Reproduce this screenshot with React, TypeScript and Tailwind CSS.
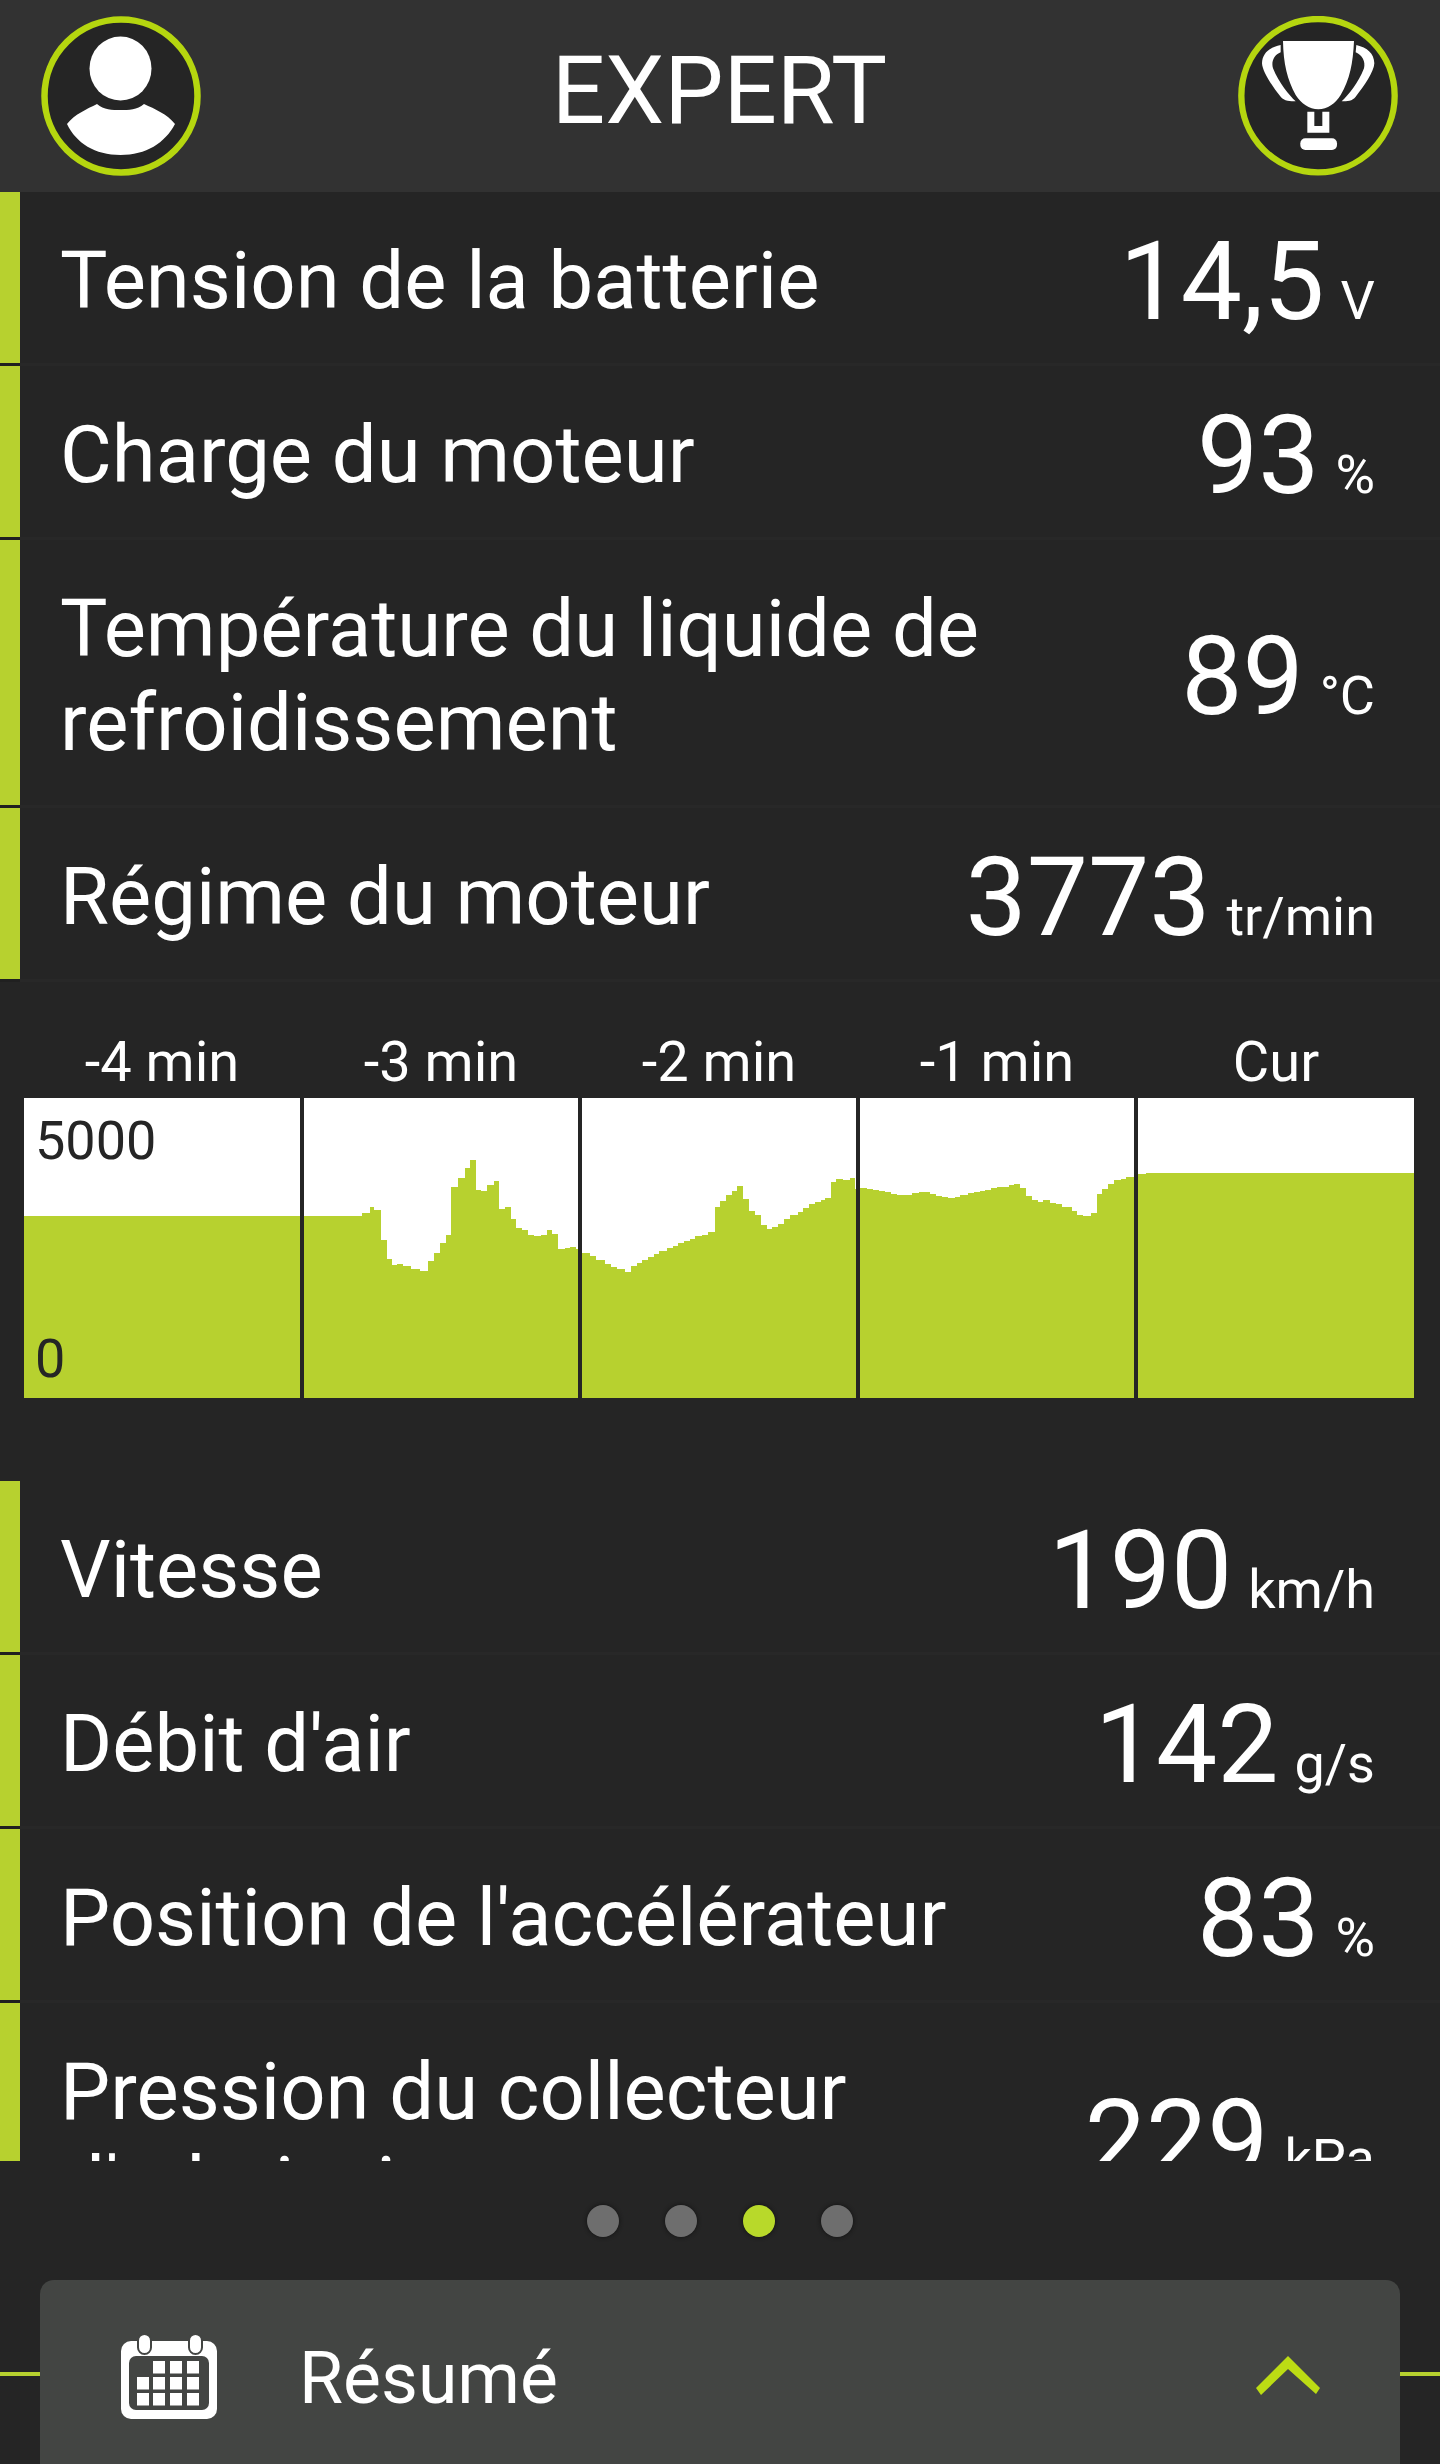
import React from "react";

const GREEN = "#b7d12f";

type Step = [number, number];

// Each step: [end x, top y] read off the chart at 3x; a column runs from the previous end x.
function outline(offset: number, start: number, steps: Step[]) {
  const pts: number[][] = [];
  let x = start;
  for (const [end, y] of steps) {
    const px = 1130 + y / 3;
    pts.push([offset + x / 3, px], [offset + end / 3, px]);
    x = end;
  }
  return pts;
}

const panels: { left: number; width: number; pts: number[][] }[] = [
  { left: 24, width: 276, pts: [[24, 1216], [300, 1216]] },
  {
    left: 304,
    width: 274,
    pts: outline(300, 12, [[186,258],[210,248],[222,232],[243,240],[261,330],[276,388],[291,405],[309,402],[333,408],[360,416],[384,424],[402,392],[420,370],[438,340],[453,316],[474,172],[495,145],[510,115],[528,90],[543,180],[561,184],[582,166],[597,153],[615,237],[633,232],[648,268],[666,294],[684,300],[702,314],[723,319],[741,314],[756,300],[774,312],[795,357],[810,354],[828,350],[834,358]]),
  },
  {
    left: 582,
    width: 274,
    pts: outline(578, 12, [[36,368],[54,378],[81,390],[99,402],[117,412],[141,418],[159,426],[177,408],[192,400],[210,390],[228,382],[243,372],[267,364],[285,355],[300,348],[318,340],[336,332],[351,326],[372,318],[390,314],[411,306],[426,232],[444,213],[462,196],[477,184],[495,168],[513,208],[531,243],[549,255],[567,284],[582,296],[600,292],[618,282],[636,268],[660,255],[675,246],[693,234],[711,222],[729,216],[741,210],[759,204],[774,155],[795,146],[816,150],[831,144],[834,176]]),
  },
  {
    left: 860,
    width: 274,
    pts: outline(856, 12, [[33,174],[51,177],[69,180],[87,183],[105,186],[123,192],[168,195],[189,190],[222,186],[240,192],[258,198],[276,202],[297,204],[312,202],[336,196],[354,190],[372,186],[387,183],[405,180],[423,174],[459,171],[474,166],[492,162],[510,174],[528,198],[546,210],[561,216],[582,210],[600,218],[618,222],[648,230],[663,244],[681,254],[705,258],[723,250],[738,192],[756,178],[774,162],[795,150],[810,146],[834,141]]),
  },
  { left: 1138, width: 276, pts: [...outline(856, 846, [[870,133],[900,129]]), [1414, 1173]] },
];

function ChartPanel({ left, width, pts }: { left: number; width: number; pts: number[][] }) {
  const poly = [[left, 1398], ...pts, [left + width, 1398]].map((p) => p.join(",")).join(" ");
  return (
    <svg
      viewBox={`${left} 1098 ${width} 300`}
      width={width}
      height={300}
      className="block shrink-0 bg-white"
      shapeRendering="crispEdges"
    >
      <polygon points={poly} fill={GREEN} />
    </svg>
  );
}

function Row({ label, value, unit, tall }: { label: React.ReactNode; value: string; unit: string; tall?: boolean }) {
  return (
    <div className={`flex ${tall ? "h-[268px]" : "h-[174px]"}`}>
      <div className="w-5 shrink-0 border-b-[3px] border-[#202020] bg-[#b7d12f] bg-clip-padding" />
      <div className="flex flex-1 items-center justify-between border-b-[3px] border-[#282828] pl-[40px] pr-[65px]">
        <div className="mt-[7px] text-[79.6px] leading-[94px] text-white">{label}</div>
        <div className="mt-[8px] flex items-baseline whitespace-nowrap text-white">
          <span className="text-[109px] leading-[120px]">{value}</span>
          <span className="ml-[16px] text-[54px] leading-[60px]">{unit}</span>
        </div>
      </div>
    </div>
  );
}

function Avatar() {
  return (
    <svg width={160} height={160} viewBox="41 16 160 160">
      <circle cx="121" cy="96" r="76.5" fill="#252525" stroke="#b5d60f" strokeWidth="6.5" />
      <ellipse cx="120.5" cy="68.5" rx="31" ry="32" fill="#fff" />
      <path d="M97 104 C104 110 112 110 120.5 110 C129 110 137 110 144 104 C155 109 167 114 175 124 C165 143 146 155 120.5 155 C95 155 76 143 67 124 C75 114 87 109 97 104Z" fill="#fff" />
    </svg>
  );
}

function Trophy() {
  return (
    <svg width={160} height={160} viewBox="417 48 480 480">
      <circle cx="657" cy="287" r="230" fill="#252525" stroke="#b5d60f" strokeWidth="19" />
      <path d="M552 123 H765 C762 190 752 240 725 285 C710 310 685 328 658 328 C631 328 606 310 590 285 C565 240 553 190 552 123Z" fill="#fff" />
      <path d="M545 135 C510 143 490 160 489 190 C490 215 520 260 545 290 C555 303 575 304 590 304 C570 285 540 250 522 205 C516 185 525 165 545 157Z" fill="#fff" />
      <path d="M772 135 C805 143 825 160 826 190 C825 215 795 260 770 290 C760 303 745 304 728 304 C748 285 778 250 795 205 C800 185 790 165 770 157Z" fill="#fff" />
      <path d="M625 335 H646 V378 H670 V335 H691 V398 H625Z" fill="#fff" />
      <rect x="604" y="415" width="110" height="35" rx="15" fill="#fff" />
    </svg>
  );
}

function Calendar() {
  return (
    <svg width={96} height={87} viewBox="121 333 96 87">
      <rect x="121" y="341" width="96" height="78" rx="10" fill="#fff" />
      <rect x="129" y="356" width="80" height="54" rx="7" fill="#434543" />
      <rect x="138" y="334" width="13" height="20" rx="6.5" fill="#fff" stroke="#434543" strokeWidth="2" />
      <rect x="189" y="334" width="13" height="20" rx="6.5" fill="#fff" stroke="#434543" strokeWidth="2" />
      {[[153,361],[170,361],[187,361],[137,377],[153,377],[170,377],[187,377],[137,393],[153,393],[170,393],[187,393]].map(([x, y]) => (
        <rect key={`${x}-${y}`} x={x} y={y} width="12" height="12.5" fill="#fff" />
      ))}
    </svg>
  );
}

export default function App() {
  return (
    <div className="relative h-[2464px] w-[1440px] overflow-hidden bg-[#252525] font-['Roboto',sans-serif]">
      <header className="flex h-[192px] items-center justify-between bg-[#323232] pl-[41px] pr-[42px]">
        <Avatar />
        <h1 className="mt-[-11px] text-[94px] leading-none font-normal text-white">EXPERT</h1>
        <Trophy />
      </header>

      <Row label="Tension de la batterie" value="14,5" unit="V" />
      <Row label="Charge du moteur" value="93" unit="%" />
      <Row label={<>Température du liquide de<br />refroidissement</>} value="89" unit="°C" tall />
      <Row label="Régime du moteur" value="3773" unit="tr/min" />

      <div className="mt-[30px] ml-[24px] w-[1390px]">
        <div className="flex h-[86px] gap-1 pt-[19px] text-center text-[56px] leading-[62px] text-white">
          {["-4 min", "-3 min", "-2 min", "-1 min", "Cur"].map((t, i) => (
            <div key={t} className={i === 0 || i === 4 ? "w-[276px]" : "w-[274px]"}>{t}</div>
          ))}
        </div>
        <div className="relative flex gap-1">
          {panels.map((p) => (
            <ChartPanel key={p.left} {...p} />
          ))}
          <span className="absolute left-[11px] top-[17px] text-[54px] leading-[52px] text-[#252525]">5000</span>
          <span className="absolute left-[11px] top-[235px] text-[54px] leading-[52px] text-[#252525]">0</span>
        </div>
      </div>

      <div className="mt-[83px] h-[680px] overflow-hidden">
        <Row label="Vitesse" value="190" unit="km/h" />
        <Row label="Débit d'air" value="142" unit="g/s" />
        <Row label="Position de l'accélérateur" value="83" unit="%" />
        <Row label={<>Pression du collecteur<br />d'admission</>} value="229" unit="kPa" tall />
      </div>

      <div className="flex h-[119px] items-center justify-center gap-[46px]">
        {[0, 1, 2, 3].map((i) => (
          <div
            key={i}
            className={`h-[32px] w-[32px] rounded-full shadow-[0_0_4px_#111] ${i === 2 ? "bg-[#b8d92a]" : "bg-[#6e6e6e]"}`}
          />
        ))}
      </div>

      <div className="absolute left-0 right-0 top-[2372px] h-[4px] bg-[#b7d12f]" />
      <div className="relative mx-[40px] flex h-[184px] items-start rounded-t-[14px] bg-[#434543] pl-[81px] pr-[80px] pt-[53px]">
        <Calendar />
        <span className="ml-[82px] mt-[-1px] text-[71.5px] leading-[94px] text-white">Résumé</span>
        <svg className="ml-auto mt-[23px]" width={64} height={40} viewBox="0 0 64 40">
          <path d="M0 32 L32 0 L64 32 L60 38 L32 13 L5 39Z" fill="#bcdc14" />
        </svg>
      </div>
    </div>
  );
}
